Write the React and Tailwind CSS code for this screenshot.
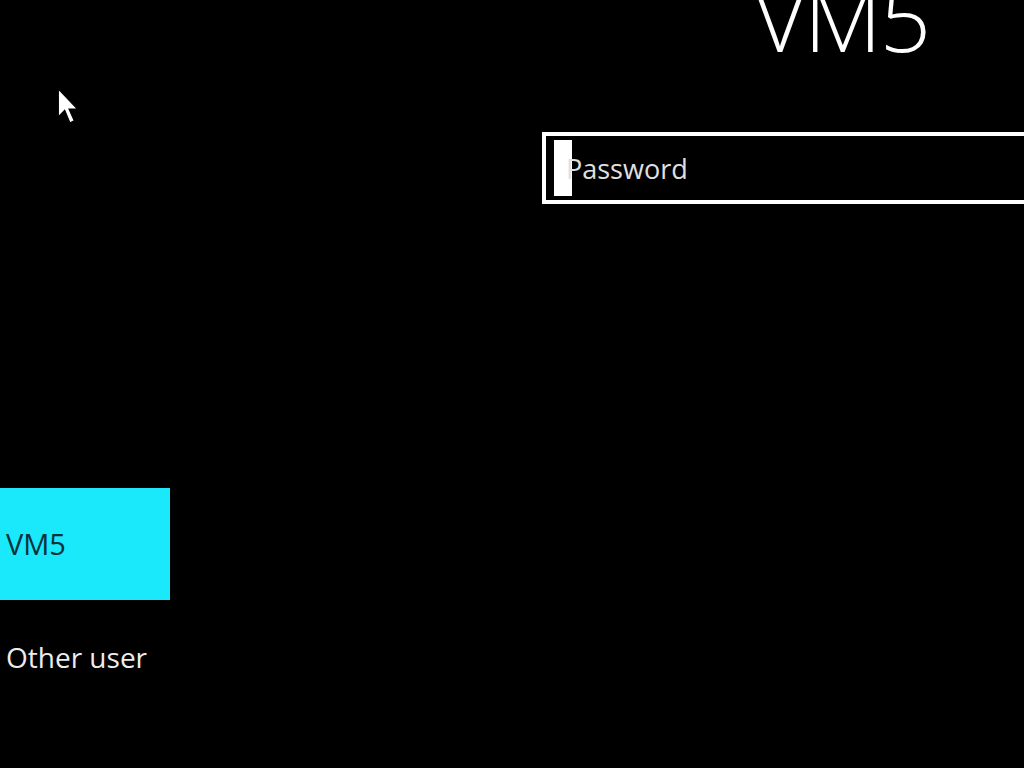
export default function App() {
  return (
    <div className="relative flex h-[768px] w-[1024px] overflow-hidden bg-black" style={{ fontFamily: '"Open Sans", "Noto Sans", sans-serif' }}>
      <div className="w-[170px] shrink-0 pt-[488px]">
        <div className="flex h-[112px] items-center bg-[#1ae8fb] pl-[6px] text-[29px] text-[#08323c]">VM5</div>
        <div className="mt-[40px] pl-[6px] text-[28px] leading-[34px] text-[#ececec]">Other user</div>
      </div>
      <div className="ml-[372px] flex flex-1 flex-col">
        <div className="-mt-[28px] ml-[212px] h-[72px] text-[90px] font-light leading-none tracking-[-2px] text-white">VM5</div>
        <div className="mt-[88px] flex h-[72px] items-center border-[4px] border-r-0 border-white pl-[8px]">
          <div className="h-[56px] w-[18px] bg-white"></div>
          <span className="-ml-[6px] mt-[2px] text-[27px] text-[#e0e0e0]">Password</span>
        </div>
      </div>
      <svg className="absolute left-[57px] top-[88px]" width="26" height="38" viewBox="0 0 24 36">
        <path d="M1 1 L1 27 L7 21 L12 33 L16 31 L11 20 L19 20 Z" fill="white" stroke="black" strokeWidth="1" />
      </svg>
    </div>
  );
}
